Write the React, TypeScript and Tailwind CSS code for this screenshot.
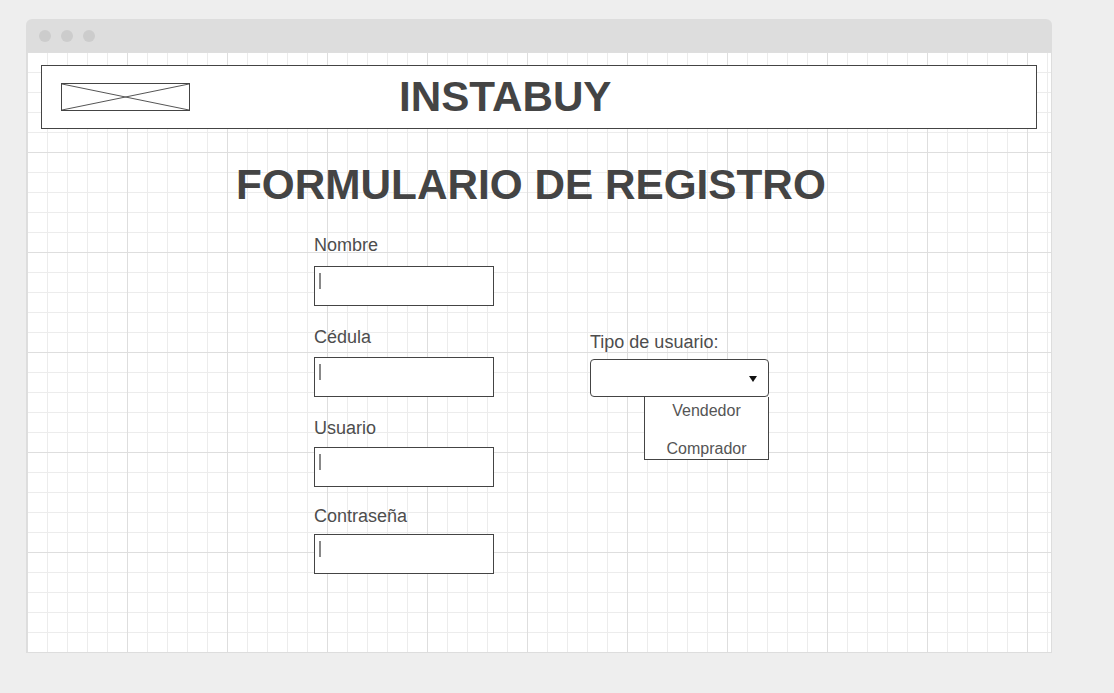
import React from 'react';

const FONT = "font-['Liberation_Sans',Arial,sans-serif]";

function TextInput() {
  return (
    <div className="w-[180px] h-[40px] border border-[#444] bg-white pl-[4px] pt-[6px]">
      <div className="w-[2px] h-[16px] bg-[#888]" />
    </div>
  );
}

function Field({ label, top, gap }: { label: string; top: number; gap: number }) {
  return (
    <div style={{ marginTop: top }}>
      <p className="text-[18px] leading-none text-[#4d4d4d]">{label}</p>
      <div style={{ marginTop: gap }}>
        <TextInput />
      </div>
    </div>
  );
}

export default function App() {
  return (
    <div className={`w-[1114px] h-[693px] bg-[#eeeeee] pt-[19px] pl-[26px] ${FONT}`}>
      {/* browser window */}
      <div className="w-[1026px] h-[634px] flex flex-col">
        <div className="h-[33px] bg-[#dddddd] rounded-t-[6px] flex items-center gap-[10px] pl-[13px]">
          <span className="w-[12px] h-[12px] rounded-full bg-[#cccccc]" />
          <span className="w-[12px] h-[12px] rounded-full bg-[#cccccc]" />
          <span className="w-[12px] h-[12px] rounded-full bg-[#cccccc]" />
        </div>
        <div className="flex-1 border-x border-b border-[#dddddd] bg-white bg-[linear-gradient(90deg,#dedede_1px,transparent_1px),linear-gradient(#dedede_1px,transparent_1px),linear-gradient(90deg,#ececec_1px,transparent_1px),linear-gradient(#ececec_1px,transparent_1px)] bg-[size:100px_100px,100px_100px,20px_20px,20px_20px]">
          {/* header */}
          <div className="mt-[13px] ml-[14px] w-[996px] h-[64px] border border-[#444] bg-white flex items-center">
            <div className="ml-[19px] w-[129px] h-[28px] border border-[#444]">
              <svg width="127" height="26" viewBox="0 0 127 26" className="block">
                <line x1="0" y1="0" x2="127" y2="26" stroke="#555" strokeWidth="1" />
                <line x1="0" y1="26" x2="127" y2="0" stroke="#555" strokeWidth="1" />
              </svg>
            </div>
            <h1 className="ml-[209px] text-[42.2px] leading-none font-bold text-[#444]">INSTABUY</h1>
          </div>

          {/* title */}
          <h2 className="mt-[35px] ml-[209px] text-[42.3px] leading-none font-bold text-[#444]">
            FORMULARIO DE REGISTRO
          </h2>

          {/* form */}
          <div className="flex">
            <div className="ml-[287px] w-[180px]">
              <Field label="Nombre" top={30} gap={12} />
              <Field label="Cédula" top={22} gap={11} />
              <Field label="Usuario" top={22} gap={10} />
              <Field label="Contraseña" top={20} gap={9} />
            </div>

            <div className="ml-[96px] mt-[127px] w-[179px]">
              <p className="text-[18px] leading-none text-[#4d4d4d]">Tipo de usuario:</p>
              <div className="mt-[8px] h-[38px] border border-[#444] rounded-[4px] bg-white flex items-center justify-end pr-[11px]">
                <svg width="8" height="6" viewBox="0 0 8 6" className="mt-[2px]">
                  <path d="M0 0 L8 0 L4 6 Z" fill="#111" />
                </svg>
              </div>
              <div className="ml-[54px] w-[125px] h-[63px] border border-t-0 border-[#444] bg-white flex flex-col items-center text-[16px] leading-none text-[#555]">
                <span className="mt-[6px]">Vendedor</span>
                <span className="mt-[22px]">Comprador</span>
              </div>
            </div>
          </div>
        </div>
      </div>
    </div>
  );
}
